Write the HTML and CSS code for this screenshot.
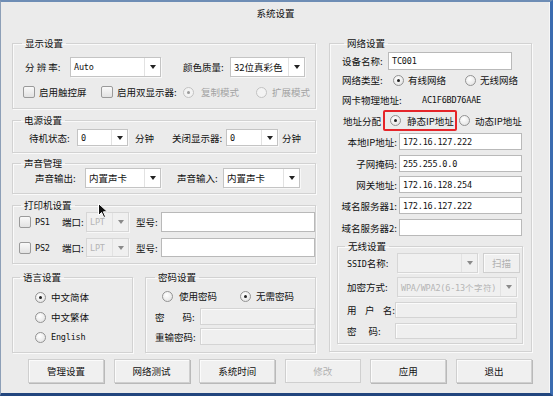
FILE: index.html
```html
<!DOCTYPE html>
<html lang="zh-CN">
<head>
<meta charset="UTF-8">
<title>系统设置</title>
<link rel="stylesheet" href="styles.css">
</head>
<body>
<div class="window">
<div class="titlebar">系统设置</div>

<div class="main">
<div class="left">

<fieldset class="group g-display">
<legend>显示设置</legend>
<div class="row r-res">
<span class="w45">分 辨 率:</span>
<div class="select w91"><span class="txt en">Auto</span><span class="arrow"></span></div>
<span class="w47 ml22">颜色质量:</span>
<div class="select w75"><span class="txt">32位真彩色</span><span class="arrow"></span></div>
</div>
<div class="row r-touch">
<span class="check"></span><span class="w62 ml4">启用触控屏</span>
<span class="check"></span><span class="w66 ml4">启用双显示器:</span>
<span class="radio on off"></span><span class="w55 ml7 dim">复制模式</span>
<span class="radio off"></span><span class="ml5 dim">扩展模式</span>
</div>
</fieldset>

<fieldset class="group g-power">
<legend>电源设置</legend>
<div class="row r-power">
<span class="w48">待机状态:</span>
<div class="select w51"><span class="txt en">0</span><span class="arrow"></span></div>
<span class="w37 ml7">分钟</span>
<span class="w54">关闭显示器:</span>
<div class="select w52"><span class="txt en">0</span><span class="arrow"></span></div>
<span class="ml4">分钟</span>
</div>
</fieldset>

<fieldset class="group g-sound">
<legend>声音管理</legend>
<div class="row r-sound">
<span class="w50">声音输出:</span>
<div class="select w76"><span class="txt">内置声卡</span><span class="arrow"></span></div>
<span class="w46 ml16">声音输入:</span>
<div class="select w77"><span class="txt">内置声卡</span><span class="arrow"></span></div>
</div>
</fieldset>

<fieldset class="group g-printer">
<legend>打印机设置</legend>
<div class="row r-ps1">
<span class="check"></span><span class="w27 ml4 en">PS1</span>
<span class="w24">端口:</span>
<div class="select w43 disabled"><span class="txt en">LPT</span><span class="arrow"></span></div>
<span class="w25 ml7">型号:</span>
<span class="input w154"></span>
</div>
<div class="row r-ps2">
<span class="check"></span><span class="w27 ml4 en">PS2</span>
<span class="w24">端口:</span>
<div class="select w43 disabled"><span class="txt en">LPT</span><span class="arrow"></span></div>
<span class="w25 ml7">型号:</span>
<span class="input w154"></span>
</div>
</fieldset>

<div class="pair">
<fieldset class="group g-lang">
<legend>语言设置</legend>
<div class="row r-opt"><span class="radio on"></span><span class="ml5">中文简体</span></div>
<div class="row r-opt"><span class="radio"></span><span class="ml5">中文繁体</span></div>
<div class="row r-opt"><span class="radio"></span><span class="ml5 en">English</span></div>
</fieldset>

<fieldset class="group g-pass">
<legend>密码设置</legend>
<div class="row r-usepw">
<span class="radio"></span><span class="w61 ml6">使用密码</span>
<span class="radio on"></span><span class="ml5">无需密码</span>
</div>
<div class="row r-pw1">
<span class="w45 spread">密<i></i>码:</span>
<span class="input w115 off"></span>
</div>
<div class="row r-pw2">
<span class="w45">重输密码:</span>
<span class="input w115 off"></span>
</div>
</fieldset>
</div>

</div>

<fieldset class="group g-net">
<legend>网络设置</legend>
<div class="row r-name">
<span class="w46">设备名称:</span>
<span class="input w124"><span class="en">TC001</span></span>
</div>
<div class="row r-type">
<span class="w51">网络类型:</span>
<span class="radio on"></span><span class="w57 ml4">有线网络</span>
<span class="radio"></span><span class="ml4">无线网络</span>
</div>
<div class="row r-mac">
<span class="w80">网卡物理地址:</span>
<span class="en">AC1F6BD76AAE</span>
</div>
<div class="row r-alloc">
<span class="w40">地址分配</span>
<span class="mark"><span class="radio on"></span><span class="ml6">静态IP地址</span></span>
<span class="radio ml2"></span><span class="ml5">动态IP地址</span>
</div>
<div class="row r-ip">
<span class="ip-lbl">本地IP地址:</span>
<span class="input w123"><span class="en">172.16.127.222</span></span>
</div>
<div class="row r-ip gap5">
<span class="ip-lbl">子网掩码:</span>
<span class="input w123"><span class="en">255.255.0.0</span></span>
</div>
<div class="row r-ip">
<span class="ip-lbl">网关地址:</span>
<span class="input w123"><span class="en">172.16.128.254</span></span>
</div>
<div class="row r-ip">
<span class="ip-lbl">域名服务器1:</span>
<span class="input w123"><span class="en">172.16.127.222</span></span>
</div>
<div class="row r-ip gap5">
<span class="ip-lbl">域名服务器2:</span>
<span class="input w123"></span>
</div>

<fieldset class="group g-wifi">
<legend>无线设置</legend>
<div class="row r-ssid">
<span class="w50"><span class="en">SSID</span>名称:</span>
<div class="select w81 disabled"><span class="txt"></span><span class="arrow"></span></div>
<span class="btn small off ml5">扫描</span>
</div>
<div class="row r-enc">
<span class="w50">加密方式:</span>
<div class="select w120 disabled"><span class="txt en">WPA/WPA2(6-13个字符)</span><span class="arrow"></span></div>
</div>
<div class="row r-user">
<span class="w48 spread">用<i></i>户<i></i>名:</span>
<span class="input w122 off"></span>
</div>
<div class="row r-wpw">
<span class="w48 spread">密<i></i>码:</span>
<span class="input w122 off"></span>
</div>
</fieldset>
</fieldset>
</div>

<div class="buttons">
<span class="btn">管理设置</span>
<span class="btn">网络测试</span>
<span class="btn">系统时间</span>
<span class="btn off">修改</span>
<span class="btn">应用</span>
<span class="btn">退出</span>
</div>

<svg class="cursor" width="11" height="16" viewBox="0 0 11 16">
<path d="M0.5 0.5 L0.5 12.5 L3.5 9.5 L5.8 14.5 L7.6 13.7 L5.4 8.8 L9.5 8.8 Z" fill="#111" stroke="#fff" stroke-width="1"/>
</svg>
</div>
</body>
</html>
```

FILE: styles.css
```css
:root {
--bg: #ebebeb;
--line: #d2d2d2;
--field: #b9b9b9;
--dim: #a3a3a3;
}

body {
margin: 0;
font-family: "Noto Sans CJK SC", "Liberation Sans", sans-serif;
font-size: 9.5px;
color: #111;
}

.window {
position: relative;
width: 553px;
height: 396px;
box-sizing: border-box;
background: var(--bg);
border-top: 2px solid #6e8db5;
border-left: 1px solid #8d9fb7;
border-right: 3px solid #3b6cb0;
border-bottom: 3px solid #22467e;
box-shadow: inset -1px 0 0 #f7f7f7;
}

.titlebar {
height: 35px;
box-sizing: border-box;
padding-top: 5px;
line-height: 12px;
text-align: center;
}

.main {
display: flex;
padding-left: 11px;
height: 316px;
}

.left {
width: 304px;
display: flex;
flex-direction: column;
}

/* group boxes */
.group {
margin: 0;
padding: 0;
min-width: 0;
box-sizing: border-box;
border: 1px solid var(--line);
box-shadow: 1px 1px 0 #fafafa, inset 1px 1px 0 #fafafa;
}

.group legend {
padding: 0 3px;
margin-left: 9px;
line-height: 12px;
}

.g-display { height: 72px; }
.g-power { height: 39px; margin-top: 5px; }
.g-sound { height: 37px; margin-top: 4px; }
.g-printer { height: 65px; margin-top: 5px; }
.g-power legend, .g-sound legend, .g-printer legend { margin-left: 8px; }

.pair {
display: flex;
margin-top: 7px;
height: 82px;
}
.g-lang { width: 121px; }
.g-lang legend { margin-left: 7px; }
.g-pass { width: 171px; margin-left: 12px; }

.g-net {
width: 203px;
height: 315px;
margin-left: 13px;
}
.g-net legend { margin-left: 14px; }

.g-wifi {
width: 186px;
height: 104px;
margin: 4px 0 0 7px;
}
.g-wifi legend { margin-left: 7px; }

/* rows */
.row {
display: flex;
align-items: center;
white-space: nowrap;
}
.row > * { flex: none; }

.r-res { margin-top: 8px; height: 20px; padding-left: 12px; }
.r-touch { margin-top: 7px; height: 16px; padding-left: 10px; }
.r-power { margin-top: 3px; height: 17px; padding-left: 16px; }
.r-sound { margin-top: -1px; height: 20px; padding-left: 22px; }
.r-ps1 { margin-top: 1px; height: 20px; padding-left: 6px; }
.r-ps2 { margin-top: 6px; height: 19px; padding-left: 6px; }
.r-opt { height: 20px; padding-left: 22px; }
.r-opt:first-of-type { margin-top: 4px; }
.r-usepw { margin-top: 4px; height: 18px; padding-left: 16px; }
.r-pw1 { margin-top: 3px; height: 17px; padding-left: 9px; }
.r-pw2 { margin-top: 3px; height: 17px; padding-left: 9px; }

.r-name { margin-top: 3px; height: 18px; padding-left: 12px; }
.r-type { margin-top: 2px; height: 16px; padding-left: 12px; }
.r-mac { margin-top: 4px; height: 16px; padding-left: 12px; }
.r-alloc { margin-top: 2px; height: 21px; padding-left: 13px; }
.r-ip { margin-top: 4px; height: 17px; padding-left: 5px; }
.r-alloc + .r-ip { margin-top: 2px; }
.r-ip.gap5 { margin-top: 5px; }
.ip-lbl { width: 62px; margin-right: 2px; text-align: right; }

.r-ssid { margin-top: 1px; height: 20px; padding-left: 9px; }
.r-enc { margin-top: 4px; height: 20px; padding-left: 9px; }
.r-user { margin-top: 5px; height: 16px; padding-left: 9px; }
.r-wpw { margin-top: 5px; height: 16px; padding-left: 9px; }

/* widths */
.w24 { width: 24px; } .w25 { width: 25px; } .w27 { width: 27px; }
.w37 { width: 37px; } .w40 { width: 40px; } .w43 { width: 43px; }
.w45 { width: 45px; } .w46 { width: 46px; } .w47 { width: 47px; }
.w48 { width: 48px; } .w50 { width: 50px; } .w51 { width: 51px; }
.w52 { width: 52px; } .w54 { width: 54px; } .w55 { width: 55px; }
.w57 { width: 57px; } .w61 { width: 61px; } .w62 { width: 62px; }
.w66 { width: 66px; } .w75 { width: 75px; } .w76 { width: 76px; }
.w77 { width: 77px; } .w80 { width: 80px; } .w81 { width: 81px; }
.w91 { width: 91px; } .w115 { width: 115px; } .w120 { width: 120px; }
.w122 { width: 122px; } .w123 { width: 123px; } .w124 { width: 124px; }
.w154 { width: 154px; }
.ml2 { margin-left: 2px; } .ml4 { margin-left: 4px; } .ml5 { margin-left: 5px; }
.ml6 { margin-left: 6px; } .ml7 { margin-left: 7px; } .ml16 { margin-left: 16px; }
.ml22 { margin-left: 22px; }

.spread { display: flex; }
.spread i { flex: 1; max-width: 18px; }
.w48.spread i { max-width: 12px; }

.en {
font-family: "DejaVu Sans Mono", monospace;
font-size: 8.5px;
letter-spacing: -0.2px;
}
.dim { color: var(--dim); }

/* controls */
.select {
display: flex;
height: 100%;
box-sizing: border-box;
background: #fff;
border: 1px solid #c4c4c4;
box-shadow: 1px 1px 0 #f8f8f8;
}
.select .txt {
flex: 1;
padding-left: 3px;
display: flex;
align-items: center;
overflow: hidden;
}
.select .arrow {
width: 15px;
border-left: 1px solid #e2e2e2;
display: flex;
align-items: center;
justify-content: center;
}
.select .arrow::after {
content: "";
border-top: 4px solid #222;
border-left: 3.5px solid transparent;
border-right: 3.5px solid transparent;
}
.select.disabled { background: #f0f0f0; border-color: #d6d6d6; color: var(--dim); }
.select.disabled .arrow::after { border-top-color: #8a8a8a; }
.select.disabled .txt { color: #b5b5b5; }

.input {
height: 100%;
box-sizing: border-box;
background: #fff;
border: 1px solid var(--field);
display: flex;
align-items: center;
padding-left: 3px;
}
.input.off { background: #efefef; border-color: #d4d4d4; box-shadow: inset 1px 1px 0 #fbfbfb; }

.check {
width: 12px;
height: 12px;
box-sizing: border-box;
border: 1px solid #9a9a9a;
border-radius: 2px;
background: linear-gradient(#f9f9f9, #e2e2e2);
}

.radio {
width: 11px;
height: 11px;
box-sizing: border-box;
border: 1px solid #939393;
border-radius: 50%;
background: radial-gradient(circle at 40% 35%, #ffffff, #dedede);
display: flex;
align-items: center;
justify-content: center;
}
.radio.on::after {
content: "";
width: 3px;
height: 3px;
border-radius: 50%;
background: #222;
}
.radio.off { border-color: #c2c2c2; background: #f3f3f3; }
.radio.off.on::after { background: #9a9a9a; }

.mark {
display: flex;
align-items: center;
width: 74px;
height: 21px;
box-sizing: border-box;
border: 2px solid #e5252a;
border-radius: 2px;
padding-left: 5px;
}

.btn {
display: flex;
align-items: center;
justify-content: center;
box-sizing: border-box;
background: #f0f0f0;
border: 1px solid #cfcfcf;
box-shadow: 1px 1px 0 #b9b9b9, inset 1px 1px 0 #fbfbfb;
}
.btn.off { color: #b0b0b0; box-shadow: inset 1px 1px 0 #fbfbfb; }
.btn.small { width: 37px; height: 20px; }

.buttons {
display: flex;
gap: 9.6px;
margin-top: 6px;
padding-left: 27px;
height: 24px;
}
.buttons .btn { width: 76px; height: 24px; }

.cursor {
position: absolute;
left: 97px;
top: 201px;
}
```
